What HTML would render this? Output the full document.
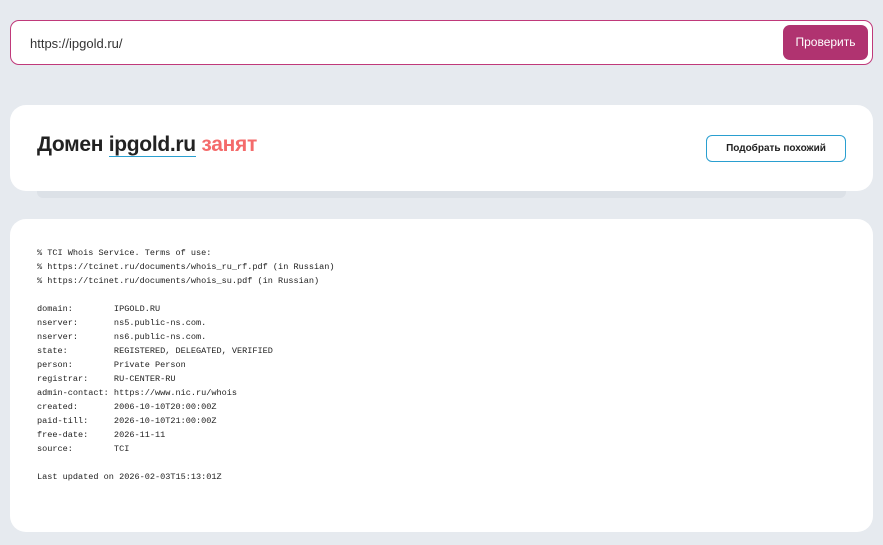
<!DOCTYPE html>
<html><head><meta charset="utf-8"><style>
body{margin:0;width:883px;height:545px;background:#e6eaef;font-family:"Liberation Sans",sans-serif;position:relative;overflow:hidden}
.search{position:absolute;left:10px;top:20px;width:861px;height:43px;border:1px solid #c0397a;border-radius:9px;background:#fff}
.search .u{position:absolute;left:19px;top:15px;font-size:13px;color:#333}
.btn{position:absolute;left:772px;top:4px;width:85px;height:35px;background:#b03370;border-radius:7px;color:#fff;font-size:12px;text-align:center;line-height:35px}
.card{position:absolute;left:10px;width:863px;background:#fff;border-radius:16px}
.strip{position:absolute;left:37px;top:186px;width:809px;height:12px;background:#dce1e7;border-radius:0 0 6px 6px}
h1{position:absolute;left:27px;top:28px;margin:0;font-size:21px;font-weight:bold;color:#222;letter-spacing:-0.3px}
h1 u{text-decoration:none;border-bottom:1.5px solid #2a9fd0}
h1 span{color:#f46b6b}
.b2{position:absolute;left:696px;top:30px;width:138px;height:25px;border:1px solid #2a9fd0;border-radius:6px;font-size:10px;font-weight:bold;text-align:center;line-height:25px;color:#222}
pre{position:absolute;left:27px;top:27px;margin:0;font-family:"Liberation Mono",monospace;font-size:8.55px;line-height:14px;color:#222}
</style></head><body>
<div class="search"><div class="u">https://ipgold.ru/</div><div class="btn">Проверить</div></div>
<div class="strip"></div>
<div class="card" style="top:105px;height:86px">
<h1>Домен <u>ipgold.ru</u> <span>занят</span></h1>
<div class="b2">Подобрать похожий</div>
</div>
<div class="card" style="top:219px;height:313px">
<pre>% TCI Whois Service. Terms of use:
% https://tcinet.ru/documents/whois_ru_rf.pdf (in Russian)
% https://tcinet.ru/documents/whois_su.pdf (in Russian)

domain:        IPGOLD.RU
nserver:       ns5.public-ns.com.
nserver:       ns6.public-ns.com.
state:         REGISTERED, DELEGATED, VERIFIED
person:        Private Person
registrar:     RU-CENTER-RU
admin-contact: https://www.nic.ru/whois
created:       2006-10-10T20:00:00Z
paid-till:     2026-10-10T21:00:00Z
free-date:     2026-11-11
source:        TCI

Last updated on 2026-02-03T15:13:01Z</pre>
</div>
</body></html>
